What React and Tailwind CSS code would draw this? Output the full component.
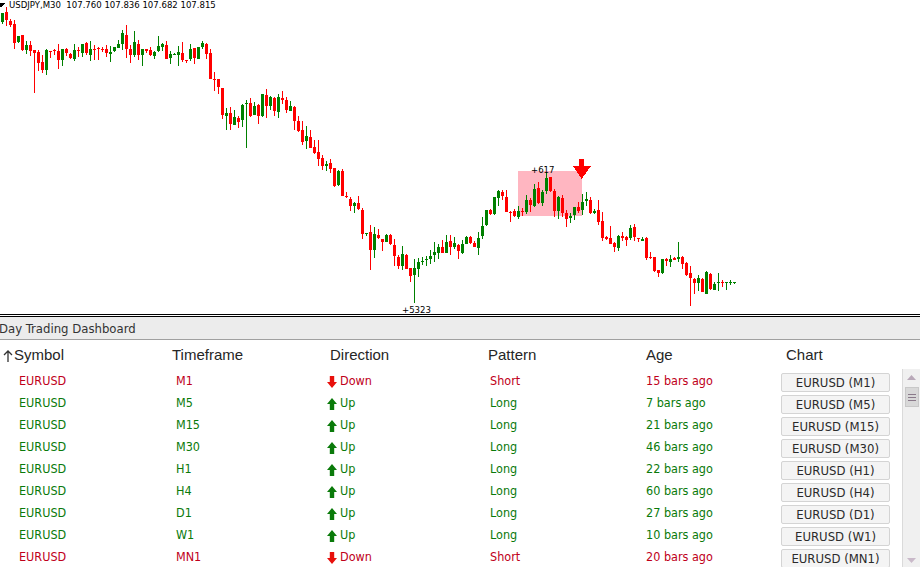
import React from "react";

// price path (x, y in chart pixels), candles follow it with some noise
const path = [
  [0, 22], [10, 34], [20, 38], [30, 48], [38, 68], [45, 60], [55, 48], [70, 56], [85, 52],
  [100, 46], [115, 40], [125, 45], [140, 55], [155, 50], [170, 48], [185, 52], [200, 50],
  [207, 62], [213, 85], [220, 100], [226, 115], [235, 120], [245, 112], [260, 105], [275, 105],
  [290, 110], [300, 128], [310, 145], [320, 155], [330, 170], [340, 185], [350, 200],
  [360, 220], [368, 240], [378, 240], [390, 238], [398, 255], [405, 270], [412, 282],
  [420, 268], [430, 250], [440, 245], [450, 242], [460, 250], [470, 245], [480, 232],
  [487, 210], [495, 195], [505, 208], [515, 210], [525, 205], [535, 195], [545, 185],
  [552, 200], [560, 205], [570, 210], [580, 210], [590, 205], [597, 215], [605, 235],
  [615, 240], [625, 235], [635, 238], [645, 255], [655, 265], [662, 258], [672, 248],
  [680, 265], [688, 285], [695, 290], [705, 280], [715, 278], [725, 285], [733, 292],
];

const spikes = { 34: { lo: 93 }, 226: { lo: 130 }, 246: { lo: 148 }, 370: { lo: 270 }, 414: { lo: 303 }, 546: { hi: 172 }, 690: { lo: 306 }, 678: { hi: 242 } };

let seed = 23;
const rnd = () => {
  seed = (seed * 16807) % 2147483647;
  return seed / 2147483647;
};

const interp = (x) => {
  for (let i = 1; i < path.length; i++) {
    const [x0, y0] = path[i - 1];
    const [x1, y1] = path[i];
    if (x <= x1) return y0 + ((y1 - y0) * (x - x0)) / (x1 - x0);
  }
  return path[path.length - 1][1];
};

const candles = [];
let prev = interp(0);
for (let x = 2; x <= 734; x += 4) {
  const open = prev;
  const close = interp(x) + (rnd() - 0.5) * 22;
  let hi = Math.min(open, close) - rnd() * rnd() * 14;
  let lo = Math.max(open, close) + rnd() * rnd() * 14;
  const sp = spikes[x];
  if (sp && sp.lo) lo = sp.lo;
  if (sp && sp.hi) hi = sp.hi;
  candles.push({ x, open: Math.round(open), close: Math.round(close), hi: Math.round(hi), lo: Math.round(lo) });
  prev = close + (rnd() - 0.5) * 3;
}

const rows = [
  ["M1", "down", "Short", "15 bars ago"],
  ["M5", "up", "Long", "7 bars ago"],
  ["M15", "up", "Long", "21 bars ago"],
  ["M30", "up", "Long", "46 bars ago"],
  ["H1", "up", "Long", "22 bars ago"],
  ["H4", "up", "Long", "60 bars ago"],
  ["D1", "up", "Long", "27 bars ago"],
  ["W1", "up", "Long", "10 bars ago"],
  ["MN1", "down", "Short", "20 bars ago"],
];

const Arrow = ({ dir }) =>
  dir === "down" ? (
    <svg width="10" height="12" viewBox="0 0 10 12" className="shrink-0">
      <polygon points="2.8,0 7.2,0 7.2,6 10,6 5,12 0,6 2.8,6" fill="#e8100c" />
    </svg>
  ) : (
    <svg width="10" height="12" viewBox="0 0 10 12" className="shrink-0">
      <polygon points="2.8,12 7.2,12 7.2,6 10,6 5,0 0,6 2.8,6" fill="#0a7a0a" />
    </svg>
  );

const chartFont = "Tahoma, 'DejaVu Sans Condensed', 'DejaVu Sans', sans-serif";

const Chart = () => (
  <svg width="920" height="314" className="block" shapeRendering="crispEdges">
    <rect x="518" y="171" width="64" height="45" fill="#ffb6c1" />
    {candles.map((c) => {
      const up = c.close < c.open;
      const col = up ? "#008000" : "#ff0000";
      const top = Math.min(c.open, c.close);
      const h = Math.max(1, Math.abs(c.open - c.close));
      return (
        <g key={c.x}>
          <rect x={c.x} y={c.hi} width="1" height={c.lo - c.hi} fill={col} />
          <rect x={c.x - 1} y={top} width="3" height={h} fill={col} />
        </g>
      );
    })}
    <polygon points="579,159 584,159 584,166 591,166 581.5,179 573,166 579,166" fill="#ff0000" />
    <polygon points="0,3 5,3 1,7 0,7" fill="#000" />
    <text x="9" y="8" fontSize="9.5" fontFamily={chartFont} fill="#000" style={{ whiteSpace: "pre" }}>
      {"USDJPY,M30  107.760 107.836 107.682 107.815"}
    </text>
    <text x="531" y="173" fontSize="9.5" fontFamily={chartFont} fill="#000">
      +617
    </text>
    <text x="402" y="313" fontSize="9.5" fontFamily={chartFont} fill="#000">
      +5323
    </text>
  </svg>
);

export default function App() {
  return (
    <div className="w-[920px] h-[567px] overflow-hidden bg-white flex flex-col">
      <Chart />
      <div className="h-px bg-black" />
      <div className="h-px bg-white" />
      <div className="h-px bg-black" />
      <div className="h-[23px] bg-[#ececec] border-b border-[#a0a0a0] flex items-center">
        <span className="-ml-[1px] pt-[1px] text-[13px] text-[#333] font-['DejaVu_Sans_Condensed','DejaVu_Sans',sans-serif]">
          Day Trading Dashboard
        </span>
      </div>
      <div className="flex flex-1 min-h-0">
        <div className="flex-1 flex flex-col">
          <div className="h-[29px] pt-[2px] grid grid-cols-[172px_155px_160px_158px_135px_1fr] items-center text-[15px] text-[#262626] font-['Liberation_Sans',Arial,sans-serif]">
            <div className="pl-[3px] flex items-center">
              <svg width="10" height="12" viewBox="0 0 10 12" className="mr-[1px]">
                <path d="M5 12V1M1 5l4-4 4 4" stroke="#333" strokeWidth="1.3" fill="none" />
              </svg>
              Symbol
            </div>
            <div>Timeframe</div>
            <div className="pl-[3px]">Direction</div>
            <div className="pl-[1px]">Pattern</div>
            <div className="pl-[1px]">Age</div>
            <div className="pl-[6px]">Chart</div>
          </div>
          {rows.map(([tf, dir, pat, age]) => {
            const color = dir === "down" ? "text-[#c0001a]" : "text-[#0a7a0a]";
            return (
              <div
                key={tf}
                className={`h-[22px] grid grid-cols-[172px_155px_160px_158px_135px_1fr] items-center text-[12.5px] font-['DejaVu_Sans_Condensed','DejaVu_Sans',sans-serif] ${color}`}
              >
                <div className="pl-[19px] mt-[2px]">EURUSD</div>
                <div className="pl-[4px] mt-[2px]">{tf}</div>
                <div className="flex items-center gap-[3px] mt-[2px]">
                  <Arrow dir={dir} />
                  <span>{dir === "down" ? "Down" : "Up"}</span>
                </div>
                <div className="pl-[3px] mt-[2px]">{pat}</div>
                <div className="pl-[1px] mt-[2px]">{age}</div>
                <div className="pl-[1px] pt-[4px] self-start">
                  <button className="w-[109px] h-[19px] bg-[#f4f4f4] border border-[#d4d4d4] rounded-[2px] text-[13px] text-[#2a2a2a] flex items-center justify-center leading-none">
                    EURUSD ({tf})
                  </button>
                </div>
              </div>
            );
          })}
        </div>
        <div className="w-[18px] mt-[29px] bg-[#f0f0f0] border-l border-[#dadada] flex flex-col items-center justify-between">
          <div className="w-full flex flex-col items-center">
            <div className="h-[17px] flex items-center justify-center">
              <svg width="9" height="5" viewBox="0 0 9 5">
                <polygon points="4.5,0 9,5 0,5" fill="#b9a9b9" />
              </svg>
            </div>
            <div className="w-[14px] h-[20px] mt-[1px] bg-[#d8d8d8] border border-[#c8c8c8] flex flex-col items-center justify-center gap-[2px]">
              <div className="w-[8px] h-px bg-[#8a7a8a]" />
              <div className="w-[8px] h-px bg-[#8a7a8a]" />
              <div className="w-[8px] h-px bg-[#8a7a8a]" />
            </div>
          </div>
          <div className="h-[14px] flex items-center justify-center">
            <svg width="9" height="5" viewBox="0 0 9 5">
              <polygon points="0,0 9,0 4.5,5" fill="#c9b9c9" />
            </svg>
          </div>
        </div>
      </div>
    </div>
  );
}
